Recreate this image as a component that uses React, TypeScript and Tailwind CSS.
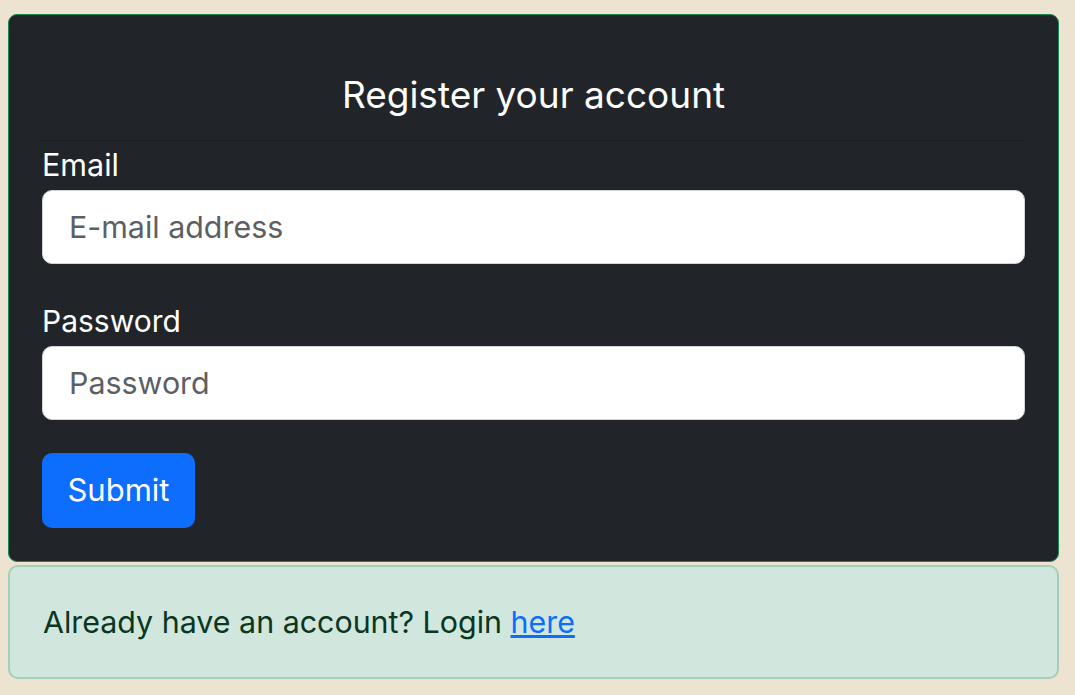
import React from 'react';

const App: React.FC = () => {
  return (
    <div
      className="min-h-[695px] bg-[#ece3d0] pl-[8px] pr-[16px] pt-[14px]"
      style={{ fontFamily: 'Inter, "Noto Sans", sans-serif' }}
    >
      <div className="rounded-[9px] border border-[#198754] bg-[#212529] px-[33px] pt-[56px] pb-[33px]">
        <h3 className="text-center text-[37px] leading-[48px] text-white">Register your account</h3>
        <hr className="mt-[21px] border-0 border-t border-[#1a1d21]" />
        <form className="mt-[4px]">
          <label className="block text-[30.5px] leading-[40px] text-white">Email</label>
          <input
            type="email"
            placeholder="E-mail address"
            className="mt-[5px] block h-[74px] w-full rounded-[10px] border border-[#ced4da] bg-white px-[26px] text-[30.4px] text-[#212529] placeholder:text-[#5c6064] outline-none"
          />
          <label className="mt-[37px] block text-[30px] leading-[40px] text-white">Password</label>
          <input
            type="password"
            placeholder="Password"
            className="mt-[5px] block h-[74px] w-full rounded-[10px] border border-[#ced4da] bg-white px-[26px] text-[30.4px] text-[#212529] placeholder:text-[#5c6064] outline-none"
          />
          <button
            type="button"
            className="mt-[33px] h-[75px] w-[153px] rounded-[10px] bg-[#0d6efd] text-[31px] text-white"
          >
            Submit
          </button>
        </form>
      </div>
      <div className="mt-[3px] flex h-[114px] items-center rounded-[10px] border-2 border-[#a3cfbb] bg-[#d1e7dd] px-[33px] pt-[2px] text-[30.4px] text-[#0a3622]">
        <p>
          Already have an account? Login <a href="#" className="text-[#0d6efd] underline">here</a>
        </p>
      </div>
    </div>
  );
};

export default App;
